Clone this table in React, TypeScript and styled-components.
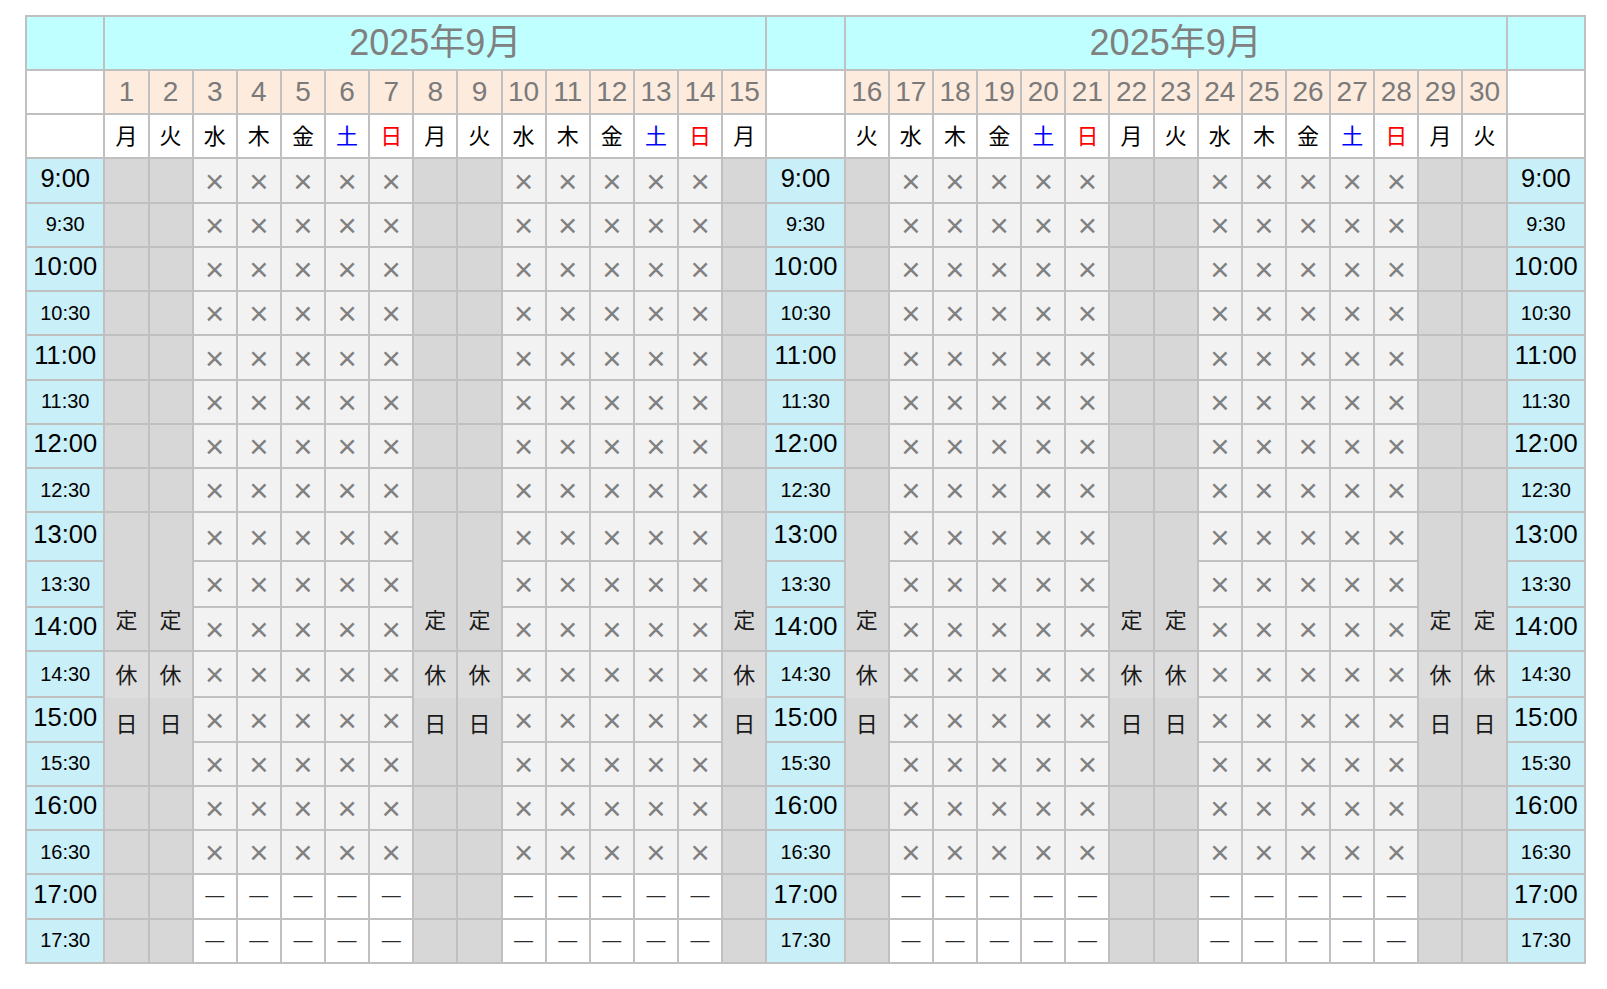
import React from 'react';
import styled, { createGlobalStyle } from 'styled-components';

const GlobalStyle = createGlobalStyle`
  html, body { margin: 0; padding: 0; background: #ffffff; }
  body { font-family: "Liberation Sans", "Noto Sans CJK JP", sans-serif; }
`;

const WEEKDAYS = ['月', '火', '水', '木', '金', '土', '日'];
const TIMES = [
  '9:00', '9:30', '10:00', '10:30', '11:00', '11:30', '12:00', '12:30',
  '13:00', '13:30', '14:00', '14:30', '15:00', '15:30', '16:00', '16:30',
  '17:00', '17:30',
];
const TIME_ROW_HEIGHTS = [
  42.25, 42.25, 42.25, 42.25, 42.25, 42.25, 42.25, 42.25,
  47, 43.3, 42.7, 44, 42.3, 42, 42.3, 42.3, 42.3, 42.3,
];

const Page = styled.div`
  padding: 15px 0 24px 25px;
`;

const Board = styled.div`
  display: grid;
  width: 1561px;
  box-sizing: border-box;
  grid-template-columns:
    76.4px repeat(15, minmax(0, 1fr)) 76.4px repeat(15, minmax(0, 1fr)) 76.4px;
  grid-template-rows: 52.4px 42px 42px ${TIME_ROW_HEIGHTS.map((h) => `${h}px`).join(' ')};
  gap: 2px;
  padding: 2px;
  background: #c0c0c0;
`;

const BaseCell = styled.div`
  display: flex;
  align-items: center;
  justify-content: center;
  min-width: 0;
  overflow: hidden;
  line-height: 1;
  white-space: nowrap;
`;

const Corner = styled(BaseCell)`
  background: #c0ffff;
`;

const BlankHead = styled(BaseCell)`
  background: #ffffff;
`;

const MonthTitle = styled(BaseCell)`
  grid-column: span 15;
  background: #c0ffff;
  color: #808080;
  font-size: 36px;
  padding-bottom: 1px;
`;

const DateCell = styled(BaseCell)`
  background: #fdebdd;
  color: #7a7a7a;
  font-size: 28px;
`;

const WeekdayCell = styled(BaseCell)<{ $tone: string }>`
  background: #ffffff;
  color: ${(p) => p.$tone};
  font-family: "Noto Sans CJK JP", sans-serif;
  font-size: 22px;
  padding-bottom: 5px;
`;

const TimeCell = styled(BaseCell)<{ $major: boolean }>`
  background: #c9eff8;
  color: #000000;
  font-size: ${(p) => (p.$major ? '25.5px' : '20px')};
  padding-bottom: ${(p) => (p.$major ? '4px' : '1px')};
`;

const ClosedCell = styled(BaseCell)`
  background: #d7d7d7;
`;

const MarkCell = styled(BaseCell)<{ $open: boolean }>`
  background: ${(p) => (p.$open ? '#ffffff' : '#f2f2f2')};
  color: ${(p) => (p.$open ? '#2e2e2e' : '#808080')};
  font-size: ${(p) => (p.$open ? '19px' : '33px')};
  padding-top: ${(p) => (p.$open ? '0' : '1px')};
  padding-bottom: ${(p) => (p.$open ? '3px' : '0')};
`;

const HolidayUpper = styled(BaseCell)`
  grid-row: span 3;
  background: #d7d7d7;
  align-items: flex-end;
  padding-bottom: 21px;
  font-family: "Noto Sans CJK JP", sans-serif;
  font-size: 22px;
  color: #1a1a1a;
`;

const HolidayLower = styled.div`
  grid-row: span 3;
  display: flex;
  flex-direction: column;
  min-width: 0;
  background: #d7d7d7;
  font-family: "Noto Sans CJK JP", sans-serif;
  font-size: 22px;
  line-height: 1;
  color: #1a1a1a;
`;

const RestBand = styled.div`
  height: 46px;
  box-sizing: border-box;
  padding-bottom: 5px;
  display: flex;
  align-items: center;
  justify-content: center;
  background: #dddddd;
`;

const RestTail = styled.div`
  flex: 1;
  display: flex;
  justify-content: center;
  padding-top: 13px;
`;

type Day = { day: number; weekday: number };

const days: Day[] = Array.from({ length: 30 }, (_, i) => ({ day: i + 1, weekday: i % 7 }));
const firstHalf = days.slice(0, 15);
const secondHalf = days.slice(15);

const isClosed = (d: Day) => d.weekday === 0 || d.weekday === 1;

const toneFor = (weekday: number) =>
  weekday === 5 ? '#0000ff' : weekday === 6 ? '#ff0000' : '#000000';

function dayCell(d: Day, r: number): React.ReactNode {
  const key = `c-${d.day}-${r}`;
  if (isClosed(d)) {
    if (r === 8) return <HolidayUpper key={key}>定</HolidayUpper>;
    if (r === 9 || r === 10) return null;
    if (r === 11)
      return (
        <HolidayLower key={key}>
          <RestBand>休</RestBand>
          <RestTail>日</RestTail>
        </HolidayLower>
      );
    if (r === 12 || r === 13) return null;
    return <ClosedCell key={key} />;
  }
  const open = r >= 16;
  return (
    <MarkCell key={key} $open={open}>
      {open ? '—' : '×'}
    </MarkCell>
  );
}

export default function App() {
  const cells: React.ReactNode[] = [];

  cells.push(<Corner key="h1a" />);
  cells.push(<MonthTitle key="h1b">2025年9月</MonthTitle>);
  cells.push(<Corner key="h1c" />);
  cells.push(<MonthTitle key="h1d">2025年9月</MonthTitle>);
  cells.push(<Corner key="h1e" />);

  cells.push(<BlankHead key="h2a" />);
  firstHalf.forEach((d) => cells.push(<DateCell key={`d${d.day}`}>{d.day}</DateCell>));
  cells.push(<BlankHead key="h2b" />);
  secondHalf.forEach((d) => cells.push(<DateCell key={`d${d.day}`}>{d.day}</DateCell>));
  cells.push(<BlankHead key="h2c" />);

  cells.push(<BlankHead key="h3a" />);
  firstHalf.forEach((d) =>
    cells.push(
      <WeekdayCell key={`w${d.day}`} $tone={toneFor(d.weekday)}>
        {WEEKDAYS[d.weekday]}
      </WeekdayCell>,
    ),
  );
  cells.push(<BlankHead key="h3b" />);
  secondHalf.forEach((d) =>
    cells.push(
      <WeekdayCell key={`w${d.day}`} $tone={toneFor(d.weekday)}>
        {WEEKDAYS[d.weekday]}
      </WeekdayCell>,
    ),
  );
  cells.push(<BlankHead key="h3c" />);

  TIMES.forEach((t, r) => {
    const major = t.endsWith(':00');
    cells.push(<TimeCell key={`ta${r}`} $major={major}>{t}</TimeCell>);
    firstHalf.forEach((d) => cells.push(dayCell(d, r)));
    cells.push(<TimeCell key={`tb${r}`} $major={major}>{t}</TimeCell>);
    secondHalf.forEach((d) => cells.push(dayCell(d, r)));
    cells.push(<TimeCell key={`tc${r}`} $major={major}>{t}</TimeCell>);
  });

  return (
    <>
      <GlobalStyle />
      <Page>
        <Board>{cells}</Board>
      </Page>
    </>
  );
}
